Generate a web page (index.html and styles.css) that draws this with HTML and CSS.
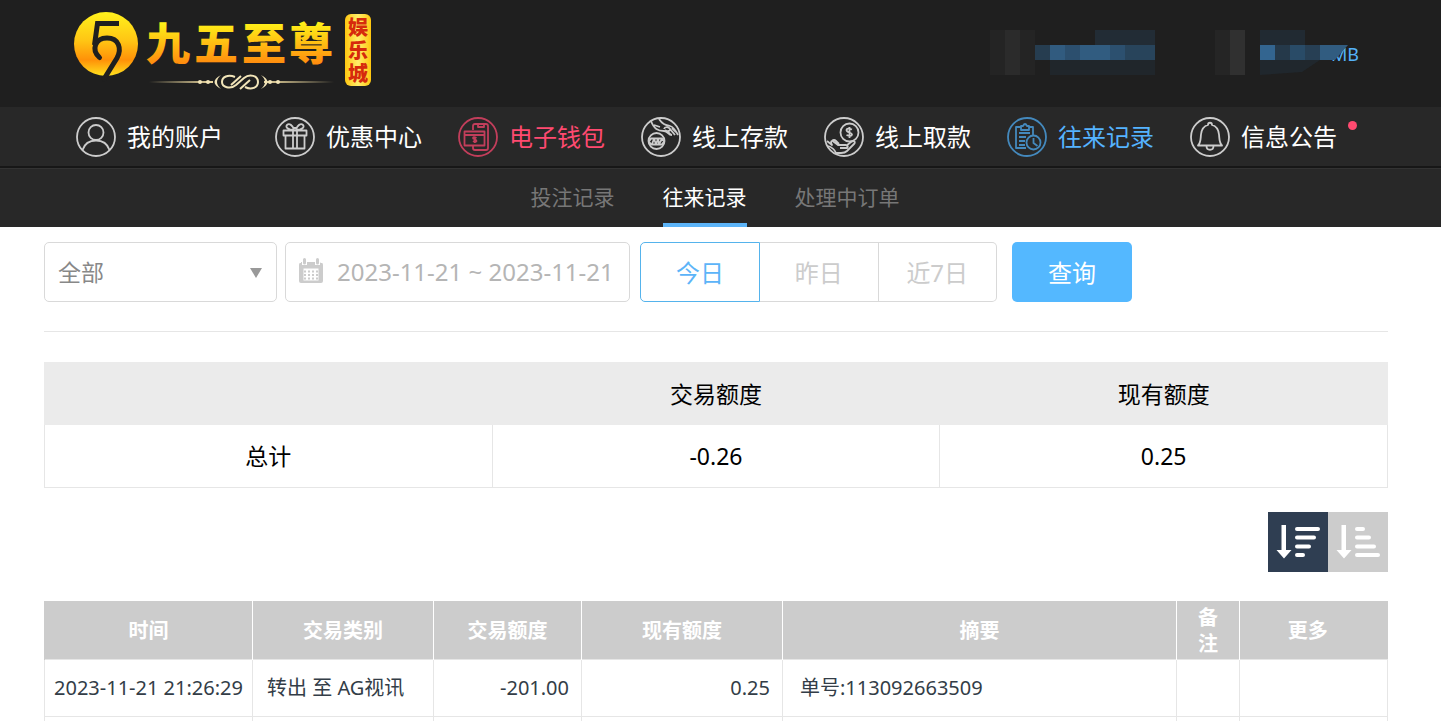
FILE: index.html
```html
<!DOCTYPE html>
<html lang="zh-CN">
<head>
    <meta charset="UTF-8">
    <meta name="viewport" content="width=device-width, initial-scale=1.0">
    <title>往来记录</title>
    <link rel="stylesheet" href="styles.css">
</head>
<body>
    <header class="header">
        <a href="#" class="logo">
            <svg width="300" height="84" viewBox="0 0 300 84" role="img" aria-label="九五至尊娱乐城">
                <defs>
                    <linearGradient id="gold" x1="0" y1="0" x2="0" y2="1">
                        <stop offset="0" stop-color="#fff21c"/>
                        <stop offset="0.45" stop-color="#ffc514"/>
                        <stop offset="0.75" stop-color="#ff9108"/>
                        <stop offset="1" stop-color="#ffe21e"/>
                    </linearGradient>
                    <linearGradient id="goldText" x1="0" y1="0" x2="0" y2="1">
                        <stop offset="0.2" stop-color="#fff318"/>
                        <stop offset="0.85" stop-color="#ff8c0e"/>
                    </linearGradient>
                    <linearGradient id="tag" x1="0" y1="0" x2="1" y2="0">
                        <stop offset="0" stop-color="#ffc60e"/>
                        <stop offset="0.5" stop-color="#ffee6a"/>
                        <stop offset="1" stop-color="#ffc60e"/>
                    </linearGradient>
                    <linearGradient id="lineLeft" x1="0" y1="0" x2="1" y2="0">
                        <stop offset="0" stop-color="#1f1f1f"/>
                        <stop offset="1" stop-color="#ecd9a0"/>
                    </linearGradient>
                    <linearGradient id="lineRight" x1="0" y1="0" x2="1" y2="0">
                        <stop offset="0" stop-color="#ecd9a0"/>
                        <stop offset="1" stop-color="#1f1f1f"/>
                    </linearGradient>
                </defs>
                <!-- round 95 mark -->
                <circle cx="33" cy="32" r="32" fill="url(#gold)"/>
                <path d="M46 11.500H24.500L21.500 33" fill="none" stroke="#1f1f1f" stroke-width="5"/>
                <path d="M26.500 45.500C18 38 22 26 34 26s15 11 10 20L31 67" fill="none" stroke="#1f1f1f" stroke-width="5" stroke-linecap="round"/>
                <text class="logo-name" x="73 121 169 216" y="48" fill="url(#goldText)">九五至尊</text>
                <rect x="76" y="69" width="64" height="2" fill="url(#lineLeft)"/>
                <rect x="191" y="69" width="70" height="2" fill="url(#lineRight)"/>
                <g fill="#f1e4b8">
                    <circle cx="127" cy="70" r="2"/><circle cx="135" cy="70" r="2"/>
                    <circle cx="205" cy="70" r="2"/><circle cx="197" cy="70" r="2"/>
                    <path d="M148 63q-8 7 0 14q-13-7 0-14zM188 63q8 7 0 14q13-7 0-14z"/>
                </g>
                <path d="M162 65c-7-3-13 0-13 5s8 8 14 3l8-7c6-5 14-2 14 4s-7 8-13 5M158 73l10-9M167 77l10-9" fill="none" stroke="#f1e4b8" stroke-width="2"/>
                <rect x="272" y="2" width="26" height="72" rx="6" fill="url(#tag)"/>
                <text class="logo-tag" x="285" y="23">娱</text>
                <text class="logo-tag" x="285" y="46">乐</text>
                <text class="logo-tag" x="285" y="69">城</text>
            </svg>
        </a>
        <div class="account">
            <svg width="165" height="45" aria-hidden="true">
                <path fill="#242424" d="M0 0h45v45H0z"/>
                <path fill="#2b2b2b" d="M15 0h15v45H15z"/>
                <path fill="#222c35" d="M105 0h60v15h-60z"/>
                <path fill="#20262b" d="M60 30h105v15H60z"/>
                <path fill="#263d50" d="M45 15h15v15H45z"/>
                <path fill="#315b7f" d="M60 15h15v15H60z"/>
                <path fill="#2c4f6e" d="M75 15h15v15H75z"/>
                <path fill="#315c80" d="M90 15h30v15H90z"/>
                <path fill="#2c506f" d="M120 15h15v15h-15z"/>
                <path fill="#28445b" d="M135 15h30v15h-30z"/>
            </svg>
            <svg width="150" height="45" aria-hidden="true">
                <text class="currency" x="116" y="31">MB</text>
                <path fill="#252525" d="M0 0h15v45H0z"/>
                <path fill="#303030" d="M15 0h15v45H15z"/>
                <path fill="#212a32" d="M45 0h45v15H45z"/>
                <path fill="#20272d" d="M45 30h60l-18 12-42 3z"/>
                <path fill="#336590" d="M45 15h15v15H45z"/>
                <path fill="#25394a" d="M60 15h15v15H60z"/>
                <path fill="#294b67" d="M75 15h15v15H75z"/>
                <path fill="#273f54" d="M90 15h15v15H90z"/>
                <path fill="#315c80" d="M105 15h28l-13 15h-15z"/>
            </svg>
        </div>
    </header>

    <nav class="nav">
        <a href="#" class="nav-item nav-first">
            <svg class="nav-icon" viewBox="0 0 40 40">
                <circle cx="20" cy="20" r="19"/>
                <circle cx="20" cy="15.500" r="7.500"/>
                <path d="M6.500 33c2-6 7-9.500 13.500-9.500S31.500 27 33.500 33"/>
            </svg>
            <span>我的账户</span>
        </a>
        <a href="#" class="nav-item">
            <svg class="nav-icon" viewBox="0 0 40 40">
                <circle cx="20" cy="20" r="19"/>
                <path d="M8.500 13.500h23v5h-23zM10.500 18.500h19v13h-19zM18 13.500v18M22 13.500v18M19 13C13 13 10 10 12 8s6 0 7 5M21 13c6 0 9-3 7-5s-6 0-7 5M18 11h4"/>
            </svg>
            <span>优惠中心</span>
        </a>
        <a href="#" class="nav-item nav-wallet">
            <svg class="nav-icon" viewBox="0 0 40 40">
                <circle cx="20" cy="20" r="19"/>
                <path d="M15 13V9q0-2 2-2h11q2 0 2 2v22q0 2-2 2H17q-2 0-2-2v-2M20 7v3h6V7M6.500 14.500h20v14h-20zM6.500 18h20"/>
                <path d="M18.500 21q-3-1.500-3.500 0c0 1.500 3.500 1 3.500 3q-1 1.500-3.500 0M16.800 19.500v6.500"/>
            </svg>
            <span>电子钱包</span>
        </a>
        <a href="#" class="nav-item">
            <svg class="nav-icon" viewBox="0 0 40 40">
                <circle cx="20" cy="20" r="19"/>
                <circle cx="15.500" cy="24" r="8"/>
                <path d="M10 21.500h11l2 3-2 3H10l-2-3zM11 27l2-5 2 5 2-5 1 5 3-5M10 4c3 8 7 10 13 10 4 0 4 4 8 4M18 2c4 6 7 6 11 7 4 1 6 5 8 9M13 8l6 2M23 12c1-3 5-2 6 0 1 2-3 3-5 1M29 12l5 6M27 15l3 3M31 11l4 4"/>
            </svg>
            <span>线上存款</span>
        </a>
        <a href="#" class="nav-item">
            <svg class="nav-icon" viewBox="0 0 40 40">
                <circle cx="20" cy="20" r="19"/>
                <circle cx="25.500" cy="15.500" r="9"/>
                <path d="M28 12.500q-5-2-5.500.5c0 3 5.500 2 5.500 4.500q-.5 2.500-5.500.5M25.500 10v11M3 24l5 4c-2-4 0-5 2-3l4 3h8q3 1 1 3h-7M8 24q2-2 4 0l3 3M22 29l5-4c3-2 5 0 3 2l-7 7q-2 2-6 2h-6M4 29q6 2 8 7"/>
            </svg>
            <span>线上取款</span>
        </a>
        <a href="#" class="nav-item nav-active">
            <svg class="nav-icon" viewBox="0 0 40 40">
                <circle cx="20" cy="20" r="19"/>
                <path d="M19 31H9V10h5M22 10h4v8M14 9h2q2-4 4 0h2v4h-8zM12 16h11M12 20h7M12 24h6M12 28h6"/>
                <circle cx="26.500" cy="25.500" r="7"/>
                <path d="M26.500 21v5l4 3"/>
            </svg>
            <span>往来记录</span>
        </a>
        <a href="#" class="nav-item">
            <svg class="nav-icon" viewBox="0 0 40 40">
                <circle cx="20" cy="20" r="19"/>
                <path d="M8 28.500c3-3 2.500-7 3-11 .5-5 3-8.500 7-9.500 0-3 4-3 4 0 4 1 6.500 4.500 7 9.500.5 4 0 8 3 11zM16.500 29c0 5 7 5 7 0"/>
            </svg>
            <span>信息公告</span>
            <i class="dot"></i>
        </a>
    </nav>

    <nav class="subnav">
        <a href="#" class="subnav-item">投注记录</a>
        <a href="#" class="subnav-item current">往来记录</a>
        <a href="#" class="subnav-item">处理中订单</a>
    </nav>

    <main class="content">
        <form class="filter">
            <div class="select-box">
                <select class="field type-select" aria-label="交易类别">
                    <option>全部</option>
                </select>
                <svg class="select-arrow" width="12" height="10" viewBox="0 0 12 10"><path d="M0 0h12L6 10z" fill="#999"/></svg>
            </div>
            <label class="field date-box">
                <svg class="calendar" width="26" height="26" viewBox="0 0 26 26" role="img" aria-label="日期">
                    <path d="M3 4h18q2 0 2 2v17q0 2-2 2H5q-2 0-2-2V6z" fill="#ccc"/>
                    <path d="M5.500 10.500h15v12h-15z" fill="#fff"/>
                    <path d="M4 1h5v6H4zM17 1h5v6h-5z" fill="#fff"/>
                    <path d="M2 5q-1 0-1 2v16q0 2 2 2h2V10h16v15h2q2 0 2-2V7q0-2-1-2z" fill="#ccc"/>
                    <path d="M4 3h5v4H4zM17 3h5v4h-5z" fill="#fff"/>
                    <path d="M6.500 1.500v3.500M19.500 1.500v3.500" stroke="#ccc" stroke-width="3" stroke-linecap="round"/>
                    <path d="M6 13.500h14M6 17h14M6 20.500h14" stroke="#ccc" stroke-width="2" stroke-dasharray="2 2"/>
                </svg>
                <input type="text" class="date-input" value="2023-11-21 ~ 2023-11-21">
            </label>
            <div class="day-group">
                <button type="button" class="day selected">今日</button>
                <button type="button" class="day">昨日</button>
                <button type="button" class="day">近7日</button>
            </div>
            <button type="button" class="search">查询</button>
        </form>

        <table class="summary">
            <thead>
                <tr>
                    <th></th>
                    <th>交易额度</th>
                    <th>现有额度</th>
                </tr>
            </thead>
            <tbody>
                <tr>
                    <td>总计</td>
                    <td>-0.26</td>
                    <td>0.25</td>
                </tr>
            </tbody>
        </table>

        <div class="sort">
            <button type="button" class="sort-btn sort-on" aria-label="降序">
                <svg width="60" height="60" viewBox="0 0 60 60">
                    <path d="M13.500 13h4.500v25h5.500l-7.500 8.500L8.500 38h5z" fill="#fff"/>
                    <path d="M29 17h21M29 25.500h17M29 34.500h12M29 43h6" stroke="#fff" stroke-width="4" stroke-linecap="round"/>
                </svg>
            </button>
            <button type="button" class="sort-btn" aria-label="升序">
                <svg width="60" height="60" viewBox="0 0 60 60">
                    <path d="M13.500 13h4.500v25h5.500l-7.500 8.500L8.500 38h5z" fill="#fff"/>
                    <path d="M29 17h6M29 25.500h12M29 34.500h17M29 43h21" stroke="#fff" stroke-width="4" stroke-linecap="round"/>
                </svg>
            </button>
        </div>

        <table class="records">
            <colgroup>
                <col class="col-time">
                <col class="col-type">
                <col class="col-amount">
                <col class="col-balance">
                <col>
                <col class="col-remark">
                <col class="col-more">
            </colgroup>
            <thead>
                <tr>
                    <th>时间</th>
                    <th>交易类别</th>
                    <th>交易额度</th>
                    <th>现有额度</th>
                    <th>摘要</th>
                    <th>备注</th>
                    <th class="more">更多</th>
                </tr>
            </thead>
            <tbody>
                <tr>
                    <td class="time">2023-11-21 21:26:29</td>
                    <td>转出 至 AG视讯</td>
                    <td class="num">-201.00</td>
                    <td class="num">0.25</td>
                    <td class="memo">单号:113092663509</td>
                    <td></td>
                    <td></td>
                </tr>
                <tr class="blank">
                    <td></td>
                    <td></td>
                    <td></td>
                    <td></td>
                    <td></td>
                    <td></td>
                    <td></td>
                </tr>
            </tbody>
        </table>
    </main>
</body>
</html>
```
FILE: styles.css
```css
* {
    box-sizing: border-box;
}
body {
    margin: 0;
    background: #fff;
    font-family: "Noto Sans", "Noto Sans CJK SC", sans-serif;
    color: #000;
}
a {
    text-decoration: none;
}
input, select, button {
    font-family: inherit;
    margin: 0;
    padding: 0;
}

/* header */
.header {
    display: flex;
    justify-content: space-between;
    align-items: flex-start;
    height: 107px;
    padding: 12px 76px 0 73px;
    background: #1f1f1f;
}
.logo svg {
    display: block;
}
.logo-name {
    font-size: 44px;
    font-weight: 900;
    font-family: "Noto Sans CJK SC", sans-serif;
}
.logo-tag {
    font-size: 20px;
    font-weight: 900;
    font-family: "Noto Sans CJK SC", sans-serif;
    text-anchor: middle;
    fill: #d62a0c;
}
.account {
    display: flex;
    gap: 60px;
    padding-top: 18px;
}
.currency {
    font-size: 18px;
    fill: #54b2f8;
}

/* main nav */
.nav {
    display: flex;
    justify-content: space-between;
    align-items: center;
    height: 61px;
    padding: 0 104px 0 76px;
    background: #282828;
    border-bottom: 2px solid #171717;
}
.nav-item {
    display: flex;
    align-items: center;
    gap: 11px;
    position: relative;
    color: #fff;
    font-size: 24px;
    line-height: 36px;
    white-space: nowrap;
}
.nav-first {
    margin-right: 16px;
}
.nav-icon {
    width: 40px;
    height: 40px;
    fill: none;
    stroke: #ccc;
    stroke-width: 1.8;
    stroke-linejoin: round;
}
.nav-wallet {
    color: #ff4a70;
}
.nav-wallet .nav-icon {
    stroke: #c23e5b;
}
.nav-active {
    color: #55b3ff;
}
.nav-active .nav-icon {
    stroke: #4489bd;
}
.dot {
    position: absolute;
    top: 4px;
    right: -20px;
    width: 9px;
    height: 9px;
    border-radius: 50%;
    background: #ff4a70;
}

/* sub nav */
.subnav {
    display: flex;
    justify-content: center;
    gap: 48px;
    height: 59px;
    padding-right: 11px;
    background: #282828;
    border-top: 1px solid #333;
}
.subnav-item {
    height: 58px;
    color: #777;
    font-size: 21px;
    line-height: 56px;
}
.subnav-item.current {
    color: #fff;
    box-shadow: inset 0 -4px #5cb4f8;
}

/* filter */
.content {
    padding: 15px 53px 0 44px;
}
.filter {
    display: flex;
    padding-bottom: 29px;
    border-bottom: 1px solid #e6e6e6;
}
.field {
    height: 60px;
    border: 1px solid #d9d9d9;
    border-radius: 5px;
    background: #fff;
}
.select-box {
    position: relative;
    margin-right: 8px;
}
.type-select {
    width: 233px;
    padding-left: 13px;
    appearance: none;
    color: #888;
    font-size: 23px;
}
.select-arrow {
    position: absolute;
    top: 26px;
    right: 15px;
}
.date-box {
    display: flex;
    align-items: center;
    gap: 13px;
    width: 345px;
    margin-right: 10px;
    padding: 0 4px 2px 12px;
}
.calendar {
    flex: none;
}
.date-input {
    flex: 1;
    min-width: 0;
    border: 0;
    outline: 0;
    color: #b5b5b5;
    font-size: 24px;
}
.day-group {
    display: flex;
    width: 357px;
    margin-right: 15px;
}
.day {
    flex: 1;
    height: 60px;
    padding-bottom: 2px;
    border: 1px solid #d9d9d9;
    border-left: 0;
    background: #fff;
    color: #ccc;
    font-size: 24px;
}
.day.selected {
    flex: 0 0 120px;
    border: 1px solid #55b3ec;
    border-radius: 5px 0 0 5px;
    color: #5cb4f8;
}
.day:last-child {
    border-radius: 0 5px 5px 0;
}
.search {
    width: 120px;
    height: 60px;
    padding-bottom: 2px;
    border: 0;
    border-radius: 5px;
    background: #54b8ff;
    color: #fff;
    font-size: 24px;
}

/* tables */
table {
    width: 100%;
    table-layout: fixed;
    border-collapse: collapse;
}
.summary {
    margin-top: 30px;
    font-size: 23px;
    line-height: 32px;
    text-align: center;
}
.summary th {
    height: 62px;
    padding: 0;
    border: 1px solid #ebebeb;
    background: #ebebeb;
    font-weight: normal;
}
.summary td {
    height: 63px;
    padding: 0;
    border: 1px solid #e6e6e6;
}
.sort {
    display: flex;
    justify-content: flex-end;
    margin: 24px 0 29px;
}
.sort-btn {
    width: 60px;
    height: 60px;
    border: 0;
    background: #ccc;
}
.sort-on {
    background: #2f3e52;
}
.sort-btn svg {
    display: block;
}
.records {
    font-size: 20px;
    line-height: 26px;
    color: #333d47;
}
.col-time {
    width: 208px;
}
.col-type {
    width: 181px;
}
.col-amount {
    width: 148px;
}
.col-balance {
    width: 201px;
}
.col-remark {
    width: 63px;
}
.col-more {
    width: 148px;
}
.records th {
    height: 58px;
    padding: 3px 20px 0;
    border-left: 1px solid #fff;
    background: #ccc;
    color: #fff;
}
.records th:first-child {
    border-left-color: #ccc;
}
.records .more {
    padding-right: 32px;
}
.records td {
    height: 57px;
    padding: 0 14px;
    border: 1px solid #e6e6e6;
    white-space: nowrap;
}
.records .time {
    padding: 0;
    text-align: center;
}
.records .num {
    padding: 0 12px;
    text-align: right;
}
.records .memo {
    padding: 0 17px;
}
.records .blank td {
    height: 5px;
    border-bottom: 0;
}
```
